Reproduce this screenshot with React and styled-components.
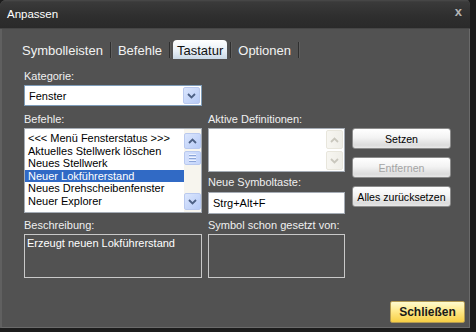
import React from "react";
import styled, { createGlobalStyle } from "styled-components";

const GlobalStyle = createGlobalStyle`
  html, body {
    margin: 0;
    padding: 0;
    background: #1c1c1c;
  }
  body {
    font-family: "Liberation Sans", Arial, sans-serif;
    font-size: 11px;
  }
`;

const Window = styled.div`
  width: 473px;
  height: 330px;
  border-right: 3px solid #1c1c1c;
  border-bottom: 2px solid #1c1c1c;
  background: #525252;
  box-sizing: border-box;
  border-radius: 6px 6px 0 0;
  overflow: hidden;
  display: flex;
  flex-direction: column;
`;

const TitleBar = styled.div`
  height: 29px;
  flex: none;
  display: flex;
  align-items: center;
  justify-content: space-between;
  padding: 0 8px 0 7px;
  background: linear-gradient(#4a4a4a 0, #3a3a3a 2px, #2e2e2e 60%, #2a2a2a 100%);
  border-bottom: 1px solid #464646;
  box-sizing: border-box;
  color: #ffffff;
  font-size: 11.5px;
`;

const CloseMark = styled.span`
  color: #b4b4b4;
  font-weight: bold;
  font-size: 13px;
  margin-top: -5px;
`;

const Body = styled.div`
  flex: 1;
  display: flex;
  flex-direction: column;
  padding: 12px 0 0 22px;
  border-left: 2px solid #606060;
  border-right: 1px solid #6a6a6a;
  border-bottom: 1px solid #6a6a6a;
  box-sizing: border-box;
`;

const TabRow = styled.div`
  display: flex;
  align-items: stretch;
  height: 18px;
  margin-left: -6px;
`;

const Tab = styled.div`
  display: flex;
  align-items: center;
  padding: 0 4px;
  font-size: 13px;
  color: ${(p) => (p.$active ? "#111" : "#f2f2f2")};
  background: ${(p) =>
    p.$active ? "linear-gradient(#ffffff, #e6eef6 60%, #c9d8e6)" : "transparent"};
  border-radius: ${(p) => (p.$active ? "4px 4px 0 0" : "0")};
  margin-top: ${(p) => (p.$active ? "-1px" : "0")};
  padding-top: ${(p) => (p.$active ? "1px" : "0")};
`;

const TabSep = styled.div`
  width: 1px;
  margin: 1px 3px;
  background: #2f2f2f;
  box-shadow: 1px 0 0 #5e5e5e;
`;

const Label = styled.div`
  color: #f0f0f0;
  line-height: 13px;
  height: 13px;
  margin-top: ${(p) => p.$top || 0}px;
  margin-bottom: ${(p) => p.$bottom || 2}px;
  white-space: nowrap;
`;

const Select = styled.div`
  width: 178px;
  height: 21px;
  box-sizing: border-box;
  border: 1px solid #7f9db9;
  background: #fff;
  display: flex;
  align-items: center;
  justify-content: space-between;
  padding: 0 1px 0 4px;
  color: #000;
`;

const ArrowButton = styled.div`
  width: 17px;
  height: ${(p) => p.$h || 17}px;
  box-sizing: border-box;
  border-radius: 2px;
  display: flex;
  align-items: center;
  justify-content: center;
  border: 1px solid ${(p) => (p.$disabled ? "#e8e6dc" : "#b9c9ef")};
  background: ${(p) =>
    p.$disabled
      ? "linear-gradient(90deg, #f7f6f1, #efeee8)"
      : "linear-gradient(135deg, #dbe6fd, #b7cbf7)"};
`;

const Columns = styled.div`
  display: flex;
  align-items: flex-start;
`;

const Col = styled.div`
  width: ${(p) => p.$w}px;
  margin-right: ${(p) => p.$gap || 0}px;
  display: flex;
  flex-direction: column;
  padding-top: ${(p) => p.$pad || 0}px;
`;

const ListBox = styled.div`
  width: 178px;
  height: 85px;
  box-sizing: border-box;
  border: 1px solid #a5acb5;
  background: #fff;
  display: flex;
  overflow: hidden;
`;

const ListItems = styled.div`
  flex: 1;
  padding-top: 3px;
  overflow: hidden;
`;

const ListItem = styled.div`
  height: 12.6px;
  line-height: 12.6px;
  padding-left: 3px;
  white-space: nowrap;
  color: ${(p) => (p.$sel ? "#fff" : "#000")};
  background: ${(p) => (p.$sel ? "#316ac5" : "transparent")};
`;

const ScrollBar = styled.div`
  width: 17px;
  background: #f7f5ee;
  display: flex;
  flex-direction: column;
  justify-content: space-between;
  padding: 4px 0 2px;
  box-sizing: border-box;
`;

const Thumb = styled.div`
  width: 17px;
  height: 14px;
  box-sizing: border-box;
  border: 1px solid #b9c9ef;
  border-radius: 2px;
  background: linear-gradient(90deg, #d4e0fc, #c3d4fa);
  display: flex;
  flex-direction: column;
  align-items: center;
  justify-content: center;
  gap: 1px;
  margin-top: 2px;
  margin-bottom: auto;
`;

const Grip = styled.div`
  width: 7px;
  height: 1px;
  background: #eef3fe;
  box-shadow: 0 1px 0 #8ca5d8;
  margin-bottom: 1px;
`;

const DefBox = styled.div`
  height: 44px;
  box-sizing: border-box;
  border: 1px solid #a5acb5;
  background: #fff;
  display: flex;
  justify-content: flex-end;
`;

const DefScroll = styled.div`
  width: 17px;
  display: flex;
  flex-direction: column;
  gap: 2px;
  padding: 1px 1px 0 0;
`;

const TextInput = styled.div`
  height: 22px;
  box-sizing: border-box;
  border: 1px solid #a5acb5;
  background: #fff;
  color: #000;
  display: flex;
  align-items: center;
  padding-left: 4px;
`;

const Button = styled.div`
  width: 99px;
  height: 21px;
  box-sizing: border-box;
  border: 1px solid #8c8c8c;
  border-radius: 3px;
  background: linear-gradient(#ffffff, #f3f3f3 45%, #dcdcdc 85%, #e8e8e8);
  color: ${(p) => (p.$disabled ? "#a4a4a4" : "#000")};
  display: flex;
  align-items: center;
  justify-content: center;
  font-size: 10.6px;
  margin-bottom: 8px;
  white-space: nowrap;
`;

const InfoBox = styled.div`
  width: ${(p) => p.$w}px;
  height: 44px;
  box-sizing: border-box;
  border: 1px solid #c9c9c9;
  color: #fff;
  padding: 2px 2px;
  line-height: 13px;
`;

const Footer = styled.div`
  display: flex;
  justify-content: flex-end;
  margin-top: 23px;
  padding-right: 4px;
`;

const PrimaryButton = styled.div`
  width: 75px;
  height: 22px;
  box-sizing: border-box;
  border: 1px solid #b39a52;
  border-radius: 2px;
  background: linear-gradient(#fffbd0, #ffe98a 45%, #f7cf45 100%);
  color: #1a1a1a;
  font-weight: bold;
  font-size: 12px;
  display: flex;
  align-items: center;
  justify-content: center;
`;

function Chevron({ up, color = "#4d6185" }) {
  return (
    <svg width="9" height="6" viewBox="0 0 9 6">
      <path
        d={up ? "M1 5 L4.5 1.5 L8 5" : "M1 1 L4.5 4.5 L8 1"}
        fill="none"
        stroke={color}
        strokeWidth="1.8"
      />
    </svg>
  );
}

const commands = [
  "<<< Menü Fensterstatus >>>",
  "Aktuelles Stellwerk löschen",
  "Neues Stellwerk",
  "Neuer Lokführerstand",
  "Neues Drehscheibenfenster",
  "Neuer Explorer",
];

export default function App() {
  return (
    <>
      <GlobalStyle />
      <Window>
        <TitleBar>
          <span>Anpassen</span>
          <CloseMark>x</CloseMark>
        </TitleBar>
        <Body>
          <TabRow>
            <Tab>Symbolleisten</Tab>
            <TabSep />
            <Tab>Befehle</Tab>
            <TabSep />
            <Tab $active>Tastatur</Tab>
            <TabSep />
            <Tab>Optionen</Tab>
            <TabSep />
          </TabRow>

          <Label $top={11}>Kategorie:</Label>
          <Select>
            <span>Fenster</span>
            <ArrowButton>
              <Chevron />
            </ArrowButton>
          </Select>

          <Columns>
            <Col $w={178} $gap={6}>
              <Label $top={7}>Befehle:</Label>
              <ListBox>
                <ListItems>
                  {commands.map((c, i) => (
                    <ListItem key={c} $sel={i === 3}>
                      {c}
                    </ListItem>
                  ))}
                </ListItems>
                <ScrollBar>
                  <ArrowButton $h={16}>
                    <Chevron up />
                  </ArrowButton>
                  <Thumb>
                    <Grip />
                    <Grip />
                    <Grip />
                  </Thumb>
                  <ArrowButton $h={17}>
                    <Chevron />
                  </ArrowButton>
                </ScrollBar>
              </ListBox>
            </Col>

            <Col $w={137} $gap={7}>
              <Label $top={7}>Aktive Definitionen:</Label>
              <DefBox>
                <DefScroll>
                  <ArrowButton $disabled $h={19}>
                    <Chevron up color="#c9c7bd" />
                  </ArrowButton>
                  <ArrowButton $disabled $h={19}>
                    <Chevron color="#c9c7bd" />
                  </ArrowButton>
                </DefScroll>
              </DefBox>
              <Label $top={4} $bottom={3}>
                Neue Symboltaste:
              </Label>
              <TextInput>Strg+Alt+F</TextInput>
            </Col>

            <Col $w={99} $pad={22}>
              <Button>Setzen</Button>
              <Button $disabled>Entfernen</Button>
              <Button>Alles zurücksetzen</Button>
            </Col>
          </Columns>

          <Columns>
            <Col $w={178} $gap={6}>
              <Label $top={4}>Beschreibung:</Label>
              <InfoBox $w={178}>Erzeugt neuen Lokführerstand</InfoBox>
            </Col>
            <Col $w={137}>
              <Label $top={4}>Symbol schon gesetzt von:</Label>
              <InfoBox $w={137} />
            </Col>
          </Columns>

          <Footer>
            <PrimaryButton>Schließen</PrimaryButton>
          </Footer>
        </Body>
      </Window>
    </>
  );
}
